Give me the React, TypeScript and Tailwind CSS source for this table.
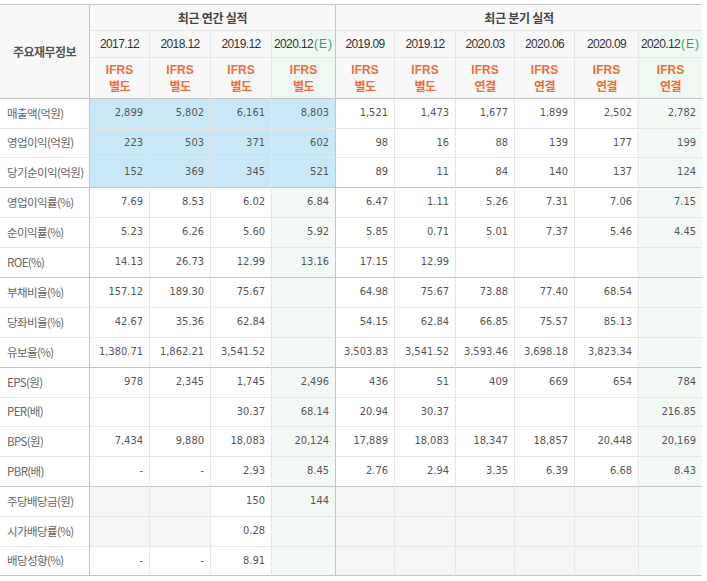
import React from 'react';

const DATES = ['2017.12', '2018.12', '2019.12', '2020.12', '2019.09', '2019.12', '2020.03', '2020.06', '2020.09', '2020.12'];
const ESTIMATE = [false, false, false, true, false, false, false, false, false, true];
const BASIS = ['별도', '별도', '별도', '별도', '별도', '별도', '연결', '연결', '연결', '연결'];

const ROWS: [string, string[]][] = [
  ['매출액(억원)', ['2,899', '5,802', '6,161', '8,803', '1,521', '1,473', '1,677', '1,899', '2,502', '2,782']],
  ['영업이익(억원)', ['223', '503', '371', '602', '98', '16', '88', '139', '177', '199']],
  ['당기순이익(억원)', ['152', '369', '345', '521', '89', '11', '84', '140', '137', '124']],
  ['영업이익률(%)', ['7.69', '8.53', '6.02', '6.84', '6.47', '1.11', '5.26', '7.31', '7.06', '7.15']],
  ['순이익률(%)', ['5.23', '6.26', '5.60', '5.92', '5.85', '0.71', '5.01', '7.37', '5.46', '4.45']],
  ['ROE(%)', ['14.13', '26.73', '12.99', '13.16', '17.15', '12.99', '', '', '', '']],
  ['부채비율(%)', ['157.12', '189.30', '75.67', '', '64.98', '75.67', '73.88', '77.40', '68.54', '']],
  ['당좌비율(%)', ['42.67', '35.36', '62.84', '', '54.15', '62.84', '66.85', '75.57', '85.13', '']],
  ['유보율(%)', ['1,380.71', '1,862.21', '3,541.52', '', '3,503.83', '3,541.52', '3,593.46', '3,698.18', '3,823.34', '']],
  ['EPS(원)', ['978', '2,345', '1,745', '2,496', '436', '51', '409', '669', '654', '784']],
  ['PER(배)', ['', '', '30.37', '68.14', '20.94', '30.37', '', '', '', '216.85']],
  ['BPS(원)', ['7,434', '9,880', '18,083', '20,124', '17,889', '18,083', '18,347', '18,857', '20,448', '20,169']],
  ['PBR(배)', ['-', '-', '2.93', '8.45', '2.76', '2.94', '3.35', '6.39', '6.68', '8.43']],
  ['주당배당금(원)', ['', '', '150', '144', '', '', '', '', '', '']],
  ['시가배당률(%)', ['', '', '0.28', '', '', '', '', '', '', '']],
  ['배당성향(%)', ['-', '-', '8.91', '', '', '', '', '', '', '']],
];

// rows that close a group get the darker rule
const GROUP_END = [2, 5, 8, 12, 15];

const cellBg = (r: number, c: number) => {
  if (r < 3 && c < 4) return 'bg-[#c9e8f7]';
  if (c === 3 || c === 9) return 'bg-[#f3f9f5]';
  if ((r === 13 || r === 14) && c < 2) return 'bg-[#f5f5f5]';
  if (r >= 13 && c >= 4) return 'bg-[#f5f5f5]';
  return 'bg-white';
};

const rightBorder = (c: number) => {
  if (c === 3) return 'border-r border-r-[#c4c4c4]';
  if (c === 9) return '';
  return 'border-r border-r-[#e6e6e6]';
};

export default function App() {
  return (
    <div className="pt-[4px] bg-white">
      <div className="w-[702px] grid grid-cols-[90px_60px_61px_61px_64px_59px_61px_59px_60px_64px_63px] grid-rows-[27px_27px_41px_30px_29px_30px_30px_30px_30px_30px_30px_30px_30px_29px_30px_30px_30px_30px_29px] font-['Noto_Sans_CJK_KR',sans-serif]">
        {/* header */}
        <div className="row-span-3 bg-[#f8f8f8] border-t border-b border-r border-[#c4c4c4] flex items-center justify-center text-[12px] font-bold text-[#555] tracking-[-0.5px]">
          주요재무정보
        </div>
        <div className="col-span-4 bg-[#f8f8f8] border-t border-t-[#c4c4c4] border-r border-r-[#c4c4c4] border-b border-b-[#e6e6e6] flex items-center justify-center text-[12px] font-bold text-[#444] tracking-[-0.3px]">
          최근 연간 실적
        </div>
        <div className="col-span-6 bg-[#f8f8f8] border-t border-t-[#c4c4c4] border-b border-b-[#e6e6e6] flex items-center justify-center text-[12px] font-bold text-[#444] tracking-[-0.3px]">
          최근 분기 실적
        </div>

        {DATES.map((d, i) => (
          <div
            key={'d' + i}
            className={`${ESTIMATE[i] ? 'bg-[#eff7f1]' : 'bg-[#f8f8f8]'} ${rightBorder(i)} border-b border-b-[#e6e6e6] flex items-center justify-center text-[12px] text-[#333] tracking-[-0.6px] font-['Liberation_Sans',sans-serif]`}
          >
            {d}
            {ESTIMATE[i] && <span className="text-[#3a9b5c] tracking-[1px] ml-[1px]">(E)</span>}
          </div>
        ))}

        {BASIS.map((b, i) => (
          <div
            key={'b' + i}
            className={`${ESTIMATE[i] ? 'bg-[#eff7f1]' : 'bg-[#f8f8f8]'} ${rightBorder(i)} border-b border-b-[#c4c4c4] flex flex-col items-center justify-center text-[12px] leading-[15px] font-bold text-[#ef6d39]`}
          >
            <span className="font-['Liberation_Sans',sans-serif]">IFRS</span>
            <span className="tracking-[-0.5px]">{b}</span>
          </div>
        ))}

        {/* body */}
        {ROWS.map(([label, values], r) => {
          const bottom = GROUP_END.includes(r) ? 'border-b border-b-[#c4c4c4]' : 'border-b border-b-[#e6e6e6]';
          return (
            <React.Fragment key={label}>
              <div className={`bg-white ${bottom} border-r border-r-[#c4c4c4] flex items-center pl-[7px] text-[11.5px] text-[#666] tracking-[-0.6px]`}>
                {label}
              </div>
              {values.map((v, c) => (
                <div
                  key={c}
                  className={`${cellBg(r, c)} ${bottom} ${rightBorder(c)} flex items-center justify-end pr-[6px] text-[11px] text-[#555] font-['DejaVu_Sans_Condensed','Liberation_Sans',sans-serif]`}
                >
                  {v}
                </div>
              ))}
            </React.Fragment>
          );
        })}
      </div>
    </div>
  );
}
